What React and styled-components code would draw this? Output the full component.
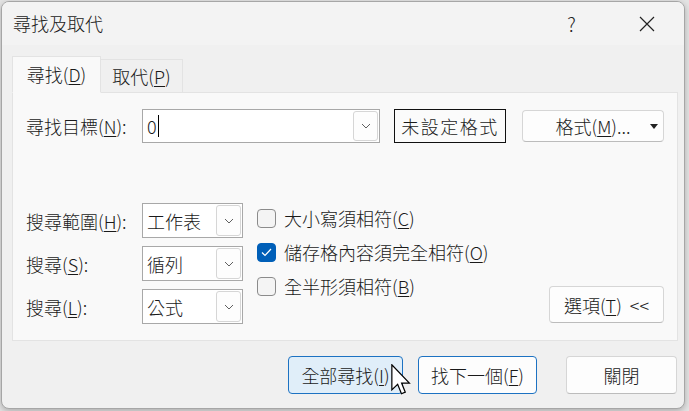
import React from 'react';
import styled, { createGlobalStyle } from 'styled-components';

const GlobalStyle = createGlobalStyle`
  html, body {
    margin: 0;
    padding: 0;
    background: #e4e4e4;
  }
  body {
    font-family: "Noto Sans CJK TC", "Microsoft JhengHei UI", sans-serif;
    font-weight: 300;
    color: #1a1a1a;
  }
  u {
    text-underline-offset: 2px;
  }
`;

const Page = styled.div`
  width: 689px;
  height: 411px;
  padding: 1px 0 0 1px;
  box-sizing: border-box;
`;

const Dialog = styled.div`
  position: relative;
  width: 684px;
  height: 408px;
  box-sizing: border-box;
  border: 1px solid #a6a6a6;
  border-radius: 8px;
  background: #f0f0f0;
  box-shadow: 0 2px 6px rgba(0, 0, 0, 0.25);
  overflow: hidden;
  display: flex;
  flex-direction: column;
`;

const TitleBar = styled.div`
  height: 43px;
  flex: none;
  background: #f3f3f3;
  display: flex;
  align-items: center;
  padding-left: 11px;
`;

const Title = styled.div`
  font-size: 18px;
  line-height: 1;
  flex: 1;
  margin-top: -2px;
`;

const CaptionButton = styled.div`
  width: 75px;
  height: 43px;
  display: flex;
  align-items: center;
  justify-content: center;
  font-size: ${(p) => (p.small ? '19px' : '18px')};
  color: #222;
`;

const Main = styled.div`
  flex: 1;
  display: flex;
  flex-direction: column;
  padding: 12px 7px 0 10px;
`;

const Tabs = styled.div`
  display: flex;
  align-items: flex-end;
  height: 36px;
  margin-bottom: -1px;
  position: relative;
  z-index: 1;
`;

const Tab = styled.div`
  box-sizing: border-box;
  height: ${(p) => (p.active ? '37px' : '34px')};
  width: ${(p) => (p.active ? '89px' : '82px')};
  display: flex;
  align-items: center;
  justify-content: center;
  font-size: 18px;
  background: ${(p) => (p.active ? '#f9f9f9' : '#f0f0f0')};
  border: 1px solid #e3e3e3;
  border-bottom: ${(p) => (p.active ? '1px solid #f9f9f9' : '1px solid #e3e3e3')};
  border-left: ${(p) => (p.active ? '1px solid #e3e3e3' : 'none')};
  padding-bottom: ${(p) => (p.active ? '2px' : '0')};
`;

const Panel = styled.div`
  box-sizing: border-box;
  width: 666px;
  height: 249px;
  background: #f9f9f9;
  border: 1px solid #e3e3e3;
  padding: 16px 13px 0 13px;
  display: flex;
  flex-direction: column;
`;

const Row = styled.div`
  display: flex;
  align-items: center;
  height: 34px;
`;

const Label = styled.div`
  width: ${(p) => p.w || 116}px;
  font-size: 18px;
  line-height: 1;
  flex: none;
`;

const Combo = styled.div`
  box-sizing: border-box;
  position: relative;
  width: ${(p) => p.w}px;
  height: ${(p) => p.h || 35}px;
  background: #fff;
  border: 1px solid #a8a8a8;
  display: flex;
  align-items: center;
  padding-left: 4px;
  font-size: 18px;
  flex: none;
`;

const ComboText = styled.span`
  flex: 1;
  display: flex;
  align-items: center;
  line-height: 1;
`;

const Caret = styled.span`
  display: inline-block;
  width: 1px;
  height: 22px;
  background: #000;
  margin-left: 1px;
`;

const DropButton = styled.div`
  box-sizing: border-box;
  width: 25px;
  align-self: stretch;
  margin: 1px 1px 1px 0;
  border: 1px solid #d6d6d6;
  border-radius: 3px;
  background: #fdfdfd;
  display: flex;
  align-items: center;
  justify-content: center;
`;

const FormatTag = styled.div`
  box-sizing: border-box;
  margin-left: 14px;
  width: 112px;
  height: 34px;
  border: 1.5px solid #111;
  background: #fbfbfb;
  display: flex;
  align-items: center;
  justify-content: center;
  font-size: 18px;
  letter-spacing: 1.5px;
`;

const Button = styled.div`
  box-sizing: border-box;
  width: ${(p) => p.w}px;
  height: ${(p) => p.h || 38}px;
  flex: none;
  display: flex;
  align-items: center;
  justify-content: center;
  font-size: 18px;
  line-height: 1;
  border-radius: 4px;
  background: ${(p) => (p.hover ? '#e0eef9' : '#fdfdfd')};
  border: 1px solid ${(p) => (p.blue ? '#1d72c2' : '#d6d6d6')};
  border-bottom-color: ${(p) => (p.blue ? '#1d72c2' : '#bcbcbc')};
`;

const SplitButton = styled(Button)`
  margin-left: 16px;
  position: relative;
`;

const SplitArrow = styled.span`
  position: absolute;
  right: 5px;
  top: 13px;
  width: 0;
  height: 0;
  border-left: 4px solid transparent;
  border-right: 4px solid transparent;
  border-top: 5px solid #222;
`;

const Lower = styled.div`
  display: flex;
  margin-top: 60px;
`;

const Fields = styled.div`
  display: grid;
  grid-template-columns: 116px auto;
  grid-auto-rows: 35px;
  row-gap: 8px;
  align-items: center;
`;

const Checks = styled.div`
  display: flex;
  flex-direction: column;
  margin-left: 14px;
  margin-top: -2px;
`;

const CheckRow = styled.div`
  display: flex;
  align-items: center;
  height: 34px;
  font-size: 18px;
  line-height: 1;
  gap: 8px;
`;

const Box = styled.span`
  box-sizing: border-box;
  width: 19px;
  height: 19px;
  border-radius: 4px;
  border: 1px solid ${(p) => (p.checked ? '#005fb8' : '#8b8b8b')};
  background: ${(p) => (p.checked ? '#005fb8' : '#f4f4f4')};
  display: flex;
  align-items: center;
  justify-content: center;
`;

const Options = styled(Button)`
  margin-left: auto;
  align-self: flex-end;
  margin-bottom: 1px;
  word-spacing: 4px;
`;

const Footer = styled.div`
  display: flex;
  justify-content: flex-end;
  align-items: center;
  gap: 15px;
  margin-top: 15px;
  padding-right: 0;
`;

const CloseButton = styled(Button)`
  margin-left: 14px;
`;

const Cursor = styled.svg`
  position: absolute;
  left: 389px;
  top: 362px;
`;

function Chevron() {
  return (
    <svg width="10" height="6" viewBox="0 0 10 6">
      <path d="M1 1 L5 5 L9 1" fill="none" stroke="#606060" strokeWidth="1" />
    </svg>
  );
}

function Check() {
  return (
    <svg width="11" height="9" viewBox="0 0 11 9">
      <path d="M1 4.5 L4 7.5 L10 1" fill="none" stroke="#fff" strokeWidth="1.2" />
    </svg>
  );
}

const fields = [
  { label: '搜尋範圍', key: 'H', value: '工作表' },
  { label: '搜尋', key: 'S', value: '循列' },
  { label: '搜尋', key: 'L', value: '公式' },
];

const checks = [
  { label: '大小寫須相符', key: 'C', checked: false },
  { label: '儲存格內容須完全相符', key: 'O', checked: true },
  { label: '全半形須相符', key: 'B', checked: false },
];

export default function App() {
  return (
    <Page>
      <GlobalStyle />
      <Dialog>
        <TitleBar>
          <Title>尋找及取代</Title>
          <CaptionButton small>?</CaptionButton>
          <CaptionButton>
            <svg width="16" height="16" viewBox="0 0 16 16">
              <path d="M1 1 L15 15 M15 1 L1 15" stroke="#222" strokeWidth="1.2" />
            </svg>
          </CaptionButton>
        </TitleBar>
        <Main>
          <Tabs>
            <Tab active>尋找(<u>D</u>)</Tab>
            <Tab>取代(<u>P</u>)</Tab>
          </Tabs>
          <Panel>
            <Row>
              <Label>尋找目標(<u>N</u>):</Label>
              <Combo w={238} h={34}>
                <ComboText>
                  0<Caret />
                </ComboText>
                <DropButton>
                  <Chevron />
                </DropButton>
              </Combo>
              <FormatTag>未設定格式</FormatTag>
              <SplitButton w={142} h={32}>
                格式(<u>M</u>)...
                <SplitArrow />
              </SplitButton>
            </Row>
            <Lower>
              <Fields>
                {fields.map((f) => (
                  <React.Fragment key={f.key}>
                    <Label>
                      {f.label}(<u>{f.key}</u>):
                    </Label>
                    <Combo w={101}>
                      <ComboText>{f.value}</ComboText>
                      <DropButton>
                        <Chevron />
                      </DropButton>
                    </Combo>
                  </React.Fragment>
                ))}
              </Fields>
              <Checks>
                {checks.map((c) => (
                  <CheckRow key={c.key}>
                    <Box checked={c.checked}>{c.checked && <Check />}</Box>
                    <span>
                      {c.label}(<u>{c.key}</u>)
                    </span>
                  </CheckRow>
                ))}
              </Checks>
              <Options w={115} h={37}>
                選項(<u>T</u>) &lt;&lt;
              </Options>
            </Lower>
          </Panel>
          <Footer>
            <Button w={115} hover blue>
              全部尋找(<u>I</u>)
            </Button>
            <Button w={119} blue>
              找下一個(<u>F</u>)
            </Button>
            <CloseButton w={111}>關閉</CloseButton>
          </Footer>
        </Main>
        <Cursor width="20" height="32" viewBox="0 0 13 21">
          <path
            d="M0.5 0.5 L0.5 17 L4.3 13.3 L6.8 19.5 L9.3 18.5 L6.9 12.5 L12 12.5 Z"
            fill="#fff"
            stroke="#000"
            strokeWidth="0.8"
            strokeLinejoin="miter"
          />
        </Cursor>
      </Dialog>
    </Page>
  );
}
